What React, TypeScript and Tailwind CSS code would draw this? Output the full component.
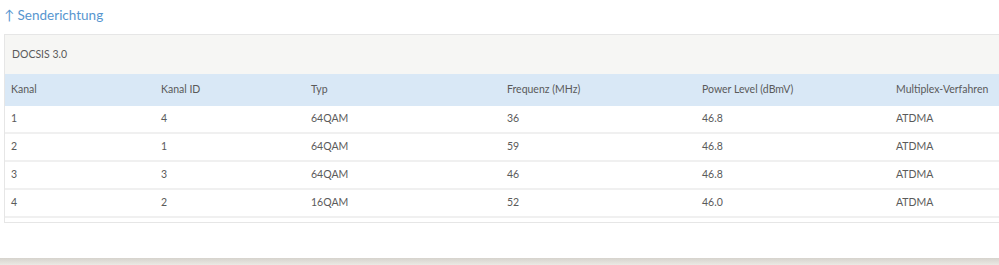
const cols = [
  { label: 'Kanal', w: 'w-[150px]' },
  { label: 'Kanal ID', w: 'w-[150px]' },
  { label: 'Typ', w: 'w-[196px]' },
  { label: 'Frequenz (MHz)', w: 'w-[195px]' },
  { label: 'Power Level (dBmV)', w: 'w-[194px]' },
  { label: 'Multiplex-Verfahren', w: 'w-[150px]' },
];

const rows = [
  ['1', '4', '64QAM', '36', '46.8', 'ATDMA'],
  ['2', '1', '64QAM', '59', '46.8', 'ATDMA'],
  ['3', '3', '64QAM', '46', '46.8', 'ATDMA'],
  ['4', '2', '16QAM', '52', '46.0', 'ATDMA'],
];

export default function App() {
  return (
    <div className="h-[265px] w-[999px] overflow-hidden bg-white font-['Lato',sans-serif] text-[#5a5a5a]">
      <div className="h-[258px]">
        <h2 className="pl-[4px] pt-[5px] text-[13.5px] leading-[20px] text-[#5796cf]">↑ Senderichtung</h2>
        <div className="ml-[4px] mt-[9px] w-[1100px] border border-[#e6e6e6] bg-white">
          <div className="flex h-[39px] items-center bg-[#f6f6f4] pl-[7px] text-[10.5px]">DOCSIS 3.0</div>
          <div className="flex h-[32px] items-center bg-[#d9e8f6] text-[10.5px]">
            {cols.map((c) => (
              <div key={c.label} className={`${c.w} shrink-0 pl-[6px]`}>
                {c.label}
              </div>
            ))}
          </div>
          {rows.map((r) => (
            <div key={r[0]} className="flex h-[28px] items-center border-b-2 border-[#f0f0f0] text-[10.5px]">
              {r.map((v, i) => (
                <div key={i} className={`${cols[i].w} shrink-0 pl-[6px]`}>
                  {v}
                </div>
              ))}
            </div>
          ))}
          <div className="h-[4px]" />
        </div>
      </div>
      <div className="h-[7px] bg-gradient-to-b from-[#d6d3cd] to-[#ebe9e4]" />
    </div>
  );
}
